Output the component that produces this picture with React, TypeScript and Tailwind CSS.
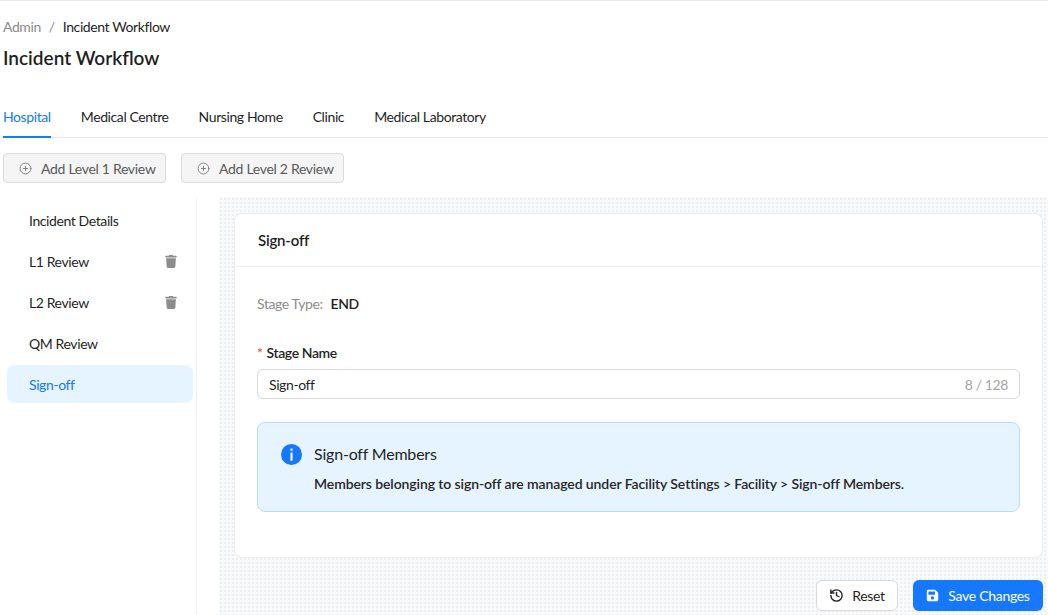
import React from "react";
import { CirclePlus, History } from "lucide-react";
import { FaTrash, FaSave } from "react-icons/fa";

const font = { fontFamily: 'Lato, "Noto Sans", sans-serif' };

function SidebarItem({ label, trash, active }: { label: string; trash?: boolean; active?: boolean }) {
  return (
    <div
      className={
        "flex h-[38px] items-center justify-between rounded-lg pl-[22px] pr-[16px] text-[14px] tracking-[-0.4px] " +
        (active ? "bg-[#e6f4ff] text-[#1677ff]" : "text-[#1f1f1f]")
      }
    >
      <span>{label}</span>
      {trash && <FaTrash className="h-[13px] w-[12px] text-[#8c8c8c]" />}
    </div>
  );
}

export default function App() {
  const tabs = ["Hospital", "Medical Centre", "Nursing Home", "Clinic", "Medical Laboratory"];
  return (
    <div className="flex h-[615px] w-[1048px] flex-col overflow-hidden border-t border-[#ececec] bg-white" style={font}>
      <div className="px-[3px]">
        <div className="mt-[14px] flex h-[22px] items-center text-[14px] tracking-[-0.4px]">
          <span className="text-[#8c8c8c]">Admin</span>
          <span className="mx-[8px] text-[#8c8c8c]">/</span>
          <span className="text-[#1f1f1f]">Incident Workflow</span>
        </div>
        <div className="mt-[7px] h-[28px] text-[19px] font-semibold leading-[28px] text-[#1f1f1f]">Incident Workflow</div>
      </div>

      <div className="mt-[34px] flex border-b border-[#eaeaea] pl-[3px]">
        {tabs.map((t, i) => (
          <div
            key={t}
            className={
              "relative mr-[30px] pb-[9px] text-[14px] leading-[22px] tracking-[-0.4px] " +
              (i === 0 ? "text-[#1677ff]" : "text-[#1f1f1f]")
            }
          >
            {t}
            {i === 0 && <div className="absolute bottom-[-1px] left-0 right-0 h-[2px] bg-[#1677ff]" />}
          </div>
        ))}
      </div>

      <div className="mt-[15px] flex gap-[15px] pl-[3px]">
        {["Add Level 1 Review", "Add Level 2 Review"].map((b) => (
          <div
            key={b}
            className="flex h-[30px] w-[163px] items-center whitespace-nowrap rounded-[4px] border border-[#dcdcdc] bg-[#f5f5f5] pl-[15px] text-[14px] tracking-[-0.3px] text-[#595959]"
          >
            <CirclePlus className="h-[13px] w-[13px] shrink-0 text-[#6b6b6b]" strokeWidth={1.5} />
            <span className="ml-[9px]">{b}</span>
          </div>
        ))}
      </div>

      <div className="mt-[14px] flex min-h-0 flex-1">
        <div className="flex w-[197px] shrink-0 flex-col gap-[3px] border-r border-[#f0f0f0] pl-[7px] pr-[3px] pt-[4px]">
          <SidebarItem label="Incident Details" />
          <SidebarItem label="L1 Review" trash />
          <SidebarItem label="L2 Review" trash />
          <SidebarItem label="QM Review" />
          <SidebarItem label="Sign-off" active />
        </div>
        <div className="w-[22px] shrink-0" />
        <div className="flex flex-1 flex-col bg-[#f9fafb] bg-[radial-gradient(#eaedf1_0.7px,transparent_0.8px)] bg-[size:4px_4px] px-[5px] pt-[16px] pl-[15px]">
          <div className="rounded-lg border border-[#ececec] bg-white">
            <div className="flex h-[53px] items-center border-b border-[#f1f1f1] px-[23px] text-[15px] font-semibold tracking-[-0.2px] text-[#1f1f1f]">
              Sign-off
            </div>
            <div className="px-[22px] pb-[45px] pt-[25px] tracking-[-0.4px]">
              <div className="flex h-[22px] items-center text-[14px]">
                <span className="text-[#8c8c8c]">Stage Type:</span>
                <span className="ml-[8px] font-semibold text-[#1f1f1f]">END</span>
              </div>
              <div className="mt-[27px] flex h-[22px] items-center text-[14px] font-semibold text-[#1f1f1f]">
                <span className="mr-[4px] text-[#ff4d4f]">*</span>
                Stage Name
              </div>
              <div className="mt-[6px] flex h-[30px] items-center justify-between rounded-[6px] border border-[#d9d9d9] px-[11px] text-[14px]">
                <span className="text-[#1f1f1f]">Sign-off</span>
                <span className="text-[#a6a6a6]">8 / 128</span>
              </div>
              <div className="mt-[23px] h-[90px] rounded-[8px] border border-[#b8dcfd] bg-[#e6f4ff] pl-[23px] pt-[19px]">
                <div className="flex h-[24px] items-center">
                  <svg width="21" height="21" viewBox="0 0 20 20">
                    <circle cx="10" cy="10" r="10" fill="#1677ff" />
                    <rect x="9" y="4.2" width="2" height="2.2" rx="0.5" fill="#fff" />
                    <rect x="9" y="8" width="2" height="8" rx="0.5" fill="#fff" />
                  </svg>
                  <span className="ml-[12px] text-[16px] tracking-[-0.2px] text-[#1f1f1f]">Sign-off Members</span>
                </div>
                <div className="ml-[33px] mt-[7px] text-[14px] font-semibold leading-[22px] tracking-[-0.1px] text-[#262626]">
                  Members belonging to sign-off are managed under Facility Settings &gt; Facility &gt; Sign-off Members.
                </div>
              </div>
            </div>
          </div>
          <div className="mt-[22px] flex justify-end gap-[15px] tracking-[-0.3px]">
            <div className="flex h-[31px] w-[82px] items-center justify-center rounded-[6px] border border-[#d9d9d9] bg-white text-[14px] text-[#1f1f1f]">
              <History className="h-[15px] w-[15px]" strokeWidth={2.2} />
              <span className="ml-[8px]">Reset</span>
            </div>
            <div className="flex h-[31px] w-[130px] items-center justify-center rounded-[6px] bg-[#1677ff] text-[14px] text-white">
              <FaSave className="h-[13px] w-[13px]" />
              <span className="ml-[9px]">Save Changes</span>
            </div>
          </div>
        </div>
      </div>
    </div>
  );
}
